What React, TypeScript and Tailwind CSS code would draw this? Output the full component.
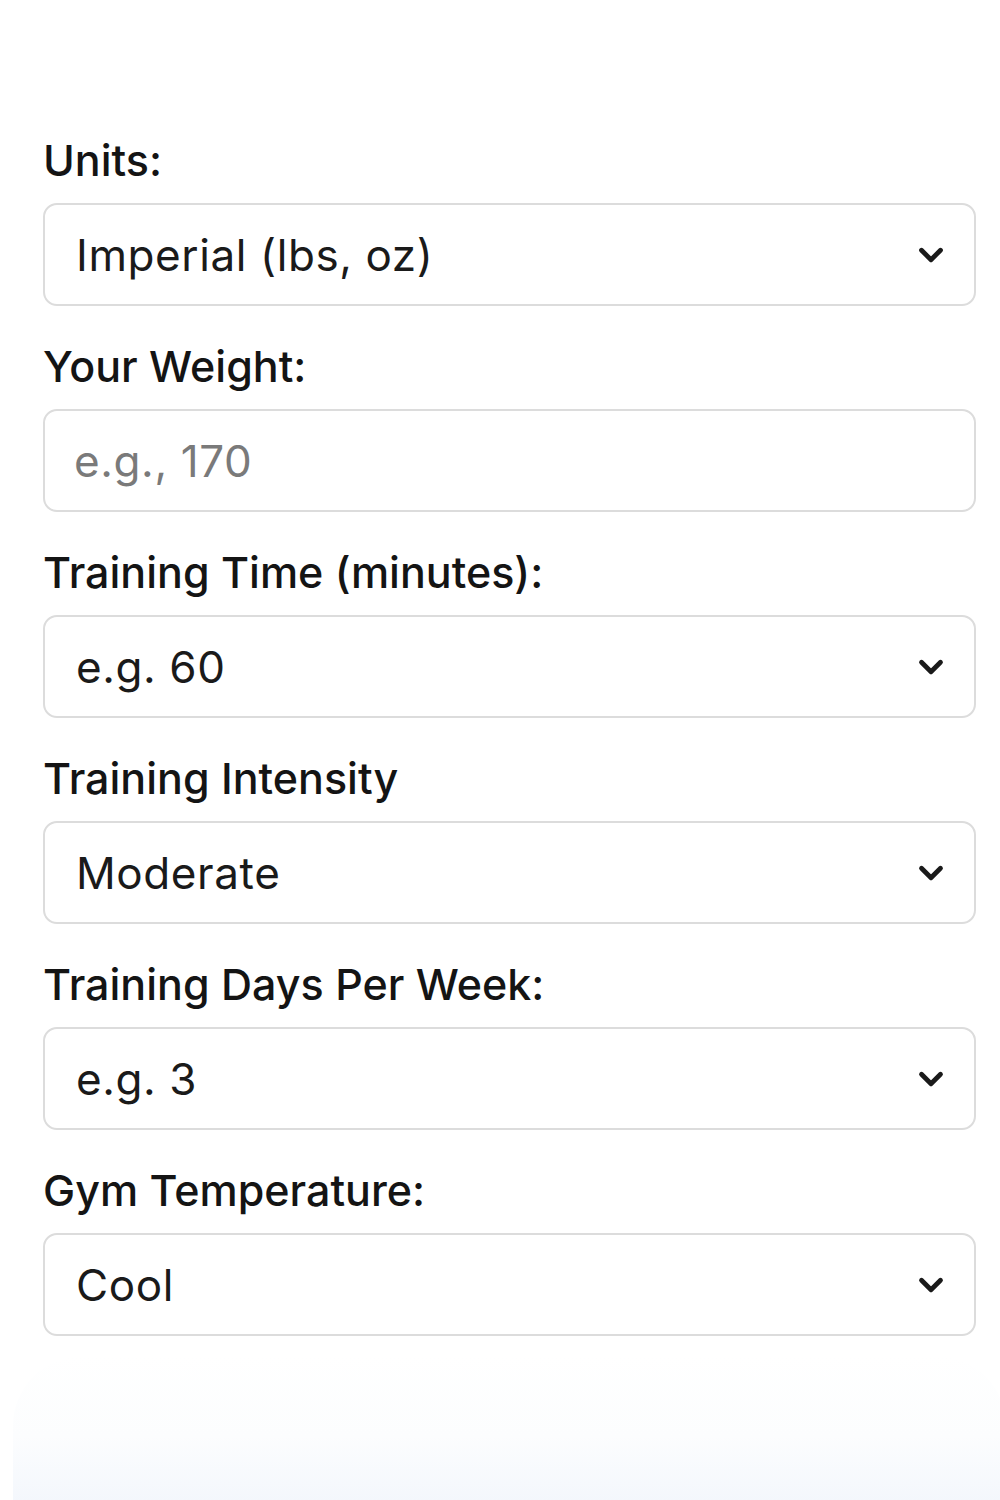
import { ChevronDown } from "lucide-react";

type Field = {
  label: string;
  value?: string;
  placeholder?: string;
  options?: string[];
};

const fields: Field[] = [
  { label: "Units:", value: "Imperial (lbs, oz)", options: ["Imperial (lbs, oz)", "Metric (kg, g)"] },
  { label: "Your Weight:", placeholder: "e.g., 170" },
  { label: "Training Time (minutes):", value: "e.g. 60", options: ["e.g. 60", "30", "45", "60", "90"] },
  { label: "Training Intensity", value: "Moderate", options: ["Light", "Moderate", "Intense"] },
  { label: "Training Days Per Week:", value: "e.g. 3", options: ["e.g. 3", "1", "2", "3", "4", "5"] },
  { label: "Gym Temperature:", value: "Cool", options: ["Cool", "Moderate", "Hot"] },
];

export default function App() {
  return (
    <div className="min-h-[1500px] bg-white font-['Inter',sans-serif] text-[#141414] overflow-hidden">
      <form className="pl-[43px] pr-[24px] pt-[134px] flex flex-col gap-[34px]">
        {fields.map((f) => (
          <div key={f.label}>
            <label className="block text-[43px] leading-[52px] font-medium mb-[17px]">
              {f.label}
            </label>
            {f.options ? (
              <div className="relative">
                <select
                  defaultValue={f.value}
                  className="appearance-none w-full h-[103px] rounded-[14px] border-2 border-[#dcdcdc] bg-white pl-[31px] pr-[80px] text-[44px] tracking-[0.6px] text-[#1a1a1a] outline-none"
                >
                  {f.options.map((o) => (
                    <option key={o}>{o}</option>
                  ))}
                </select>
                <ChevronDown
                  className="absolute right-[26px] top-1/2 -translate-y-1/2 w-[38px] h-[38px] text-[#1a1a1a] pointer-events-none"
                  strokeWidth={3}
                />
              </div>
            ) : (
              <input
                type="text"
                placeholder={f.placeholder}
                className="w-full h-[103px] rounded-[14px] border-2 border-[#dcdcdc] bg-white px-[29px] text-[44px] tracking-[0.6px] text-[#1a1a1a] placeholder:text-[#7a7a7a] outline-none"
              />
            )}
          </div>
        ))}
        <div className="mt-[-14px] h-[160px] -mx-[30px] rounded-t-[70px] bg-gradient-to-b from-white via-[#fcfdfe] to-[#f2f6fc]" />
      </form>
    </div>
  );
}
